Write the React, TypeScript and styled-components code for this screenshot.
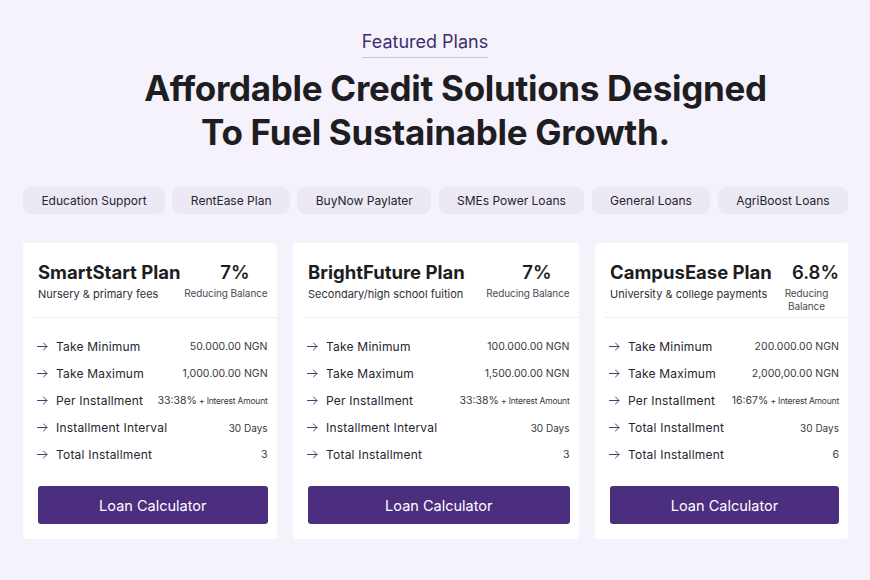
import styled, { createGlobalStyle } from 'styled-components';

interface IRow {
  label: string;
  value: string;
  note?: string;
  small?: boolean;
}

interface IPlan {
  title: string;
  subtitle: string;
  rate: string;
  rows: IRow[];
}

const TABS = ['Education Support', 'RentEase Plan', 'BuyNow Paylater', 'SMEs Power Loans', 'General Loans', 'AgriBoost Loans'];

const PLANS: IPlan[] = [
  {
    title: 'SmartStart Plan',
    subtitle: 'Nursery & primary fees',
    rate: '7%',
    rows: [
      { label: 'Take Minimum', value: '50.000.00 NGN' },
      { label: 'Take Maximum', value: '1,000.00.00 NGN' },
      { label: 'Per Installment', value: '33:38%', note: '+ Interest Amount' },
      { label: 'Installment Interval', value: '30 Days', small: true },
      { label: 'Total Installment', value: '3' },
    ],
  },
  {
    title: 'BrightFuture Plan',
    subtitle: 'Secondary/high school fuition',
    rate: '7%',
    rows: [
      { label: 'Take Minimum', value: '100.000.00 NGN' },
      { label: 'Take Maximum', value: '1,500.00.00 NGN' },
      { label: 'Per Installment', value: '33:38%', note: '+ Interest Amount' },
      { label: 'Installment Interval', value: '30 Days', small: true },
      { label: 'Total Installment', value: '3' },
    ],
  },
  {
    title: 'CampusEase Plan',
    subtitle: 'University & college payments',
    rate: '6.8%',
    rows: [
      { label: 'Take Minimum', value: '200.000.00 NGN' },
      { label: 'Take Maximum', value: '2,000,00.00 NGN' },
      { label: 'Per Installment', value: '16:67%', note: '+ Interest Amount' },
      { label: 'Total Installment', value: '30 Days', small: true },
      { label: 'Total Installment', value: '6' },
    ],
  },
];

const GlobalStyle = createGlobalStyle`
  * { box-sizing: border-box; }
  body {
    margin: 0;
    background: #f6f2fc;
    font-family: Inter, "Noto Sans", sans-serif;
    color: #1f1f24;
  }
`;

const Arrow = () => (
  <svg width="11" height="9" viewBox="0 0 11 9" fill="none" stroke="#4a3d6e" strokeWidth="1" strokeLinecap="round" strokeLinejoin="round">
    <path d="M0.5 4.5 H10" />
    <path d="M6.5 1 L10 4.5 L6.5 8" />
  </svg>
);

const App = () => {
  return (
    <>
      <GlobalStyle />
      <Page>
        <Hero>
          <Eyebrow>Featured Plans</Eyebrow>
          <Heading>
            <span className="first">Affordable Credit Solutions Designed</span>
            <span>To Fuel Sustainable Growth.</span>
          </Heading>
        </Hero>
        <Tabs>
          {TABS.map((tab) => <Tab key={tab}>{tab}</Tab>)}
        </Tabs>
        <Cards>
          {PLANS.map((plan) => (
            <Card key={plan.title}>
              <CardHeader>
                <TitleBlock>
                  <PlanTitle>{plan.title}</PlanTitle>
                  <PlanSub>{plan.subtitle}</PlanSub>
                </TitleBlock>
                <RateBlock>
                  <Rate>{plan.rate}</Rate>
                  <RateLabel>Reducing Balance</RateLabel>
                </RateBlock>
              </CardHeader>
              <Divider />
              <Rows>
                {plan.rows.map((row, index) => (
                  <Row key={index}>
                    <Arrow />
                    <RowLabel>{row.label}</RowLabel>
                    <RowValue $small={row.small}>
                      {row.value}
                      {row.note && <Note> {row.note}</Note>}
                    </RowValue>
                  </Row>
                ))}
              </Rows>
              <CalcButton>Loan Calculator</CalcButton>
            </Card>
          ))}
        </Cards>
      </Page>
    </>
  );
};

export default App;

const Page = styled.div`
  width: 870px;
  height: 580px;
  padding: 32px 22px 0 23px;
`;

const Hero = styled.header`
  display: flex;
  flex-direction: column;
  align-items: center;
`;

const Eyebrow = styled.div`
  margin-right: 21px;
  font-size: 18px;
  line-height: 20px;
  color: #3d2f6b;
  padding-bottom: 5px;
  border-bottom: 1.5px solid #cbc2e0;
`;

const Heading = styled.h1`
  margin: 8px 0 0;
  font-size: 35px;
  line-height: 44px;
  font-weight: 700;
  letter-spacing: -0.3px;
  color: #1e1e22;
  text-align: center;

  span {
    display: block;
  }

  .first {
    padding-left: 40px;
  }
`;

const Tabs = styled.nav`
  margin-top: 33px;
  display: flex;
  gap: 7.5px;
`;

const Tab = styled.div`
  flex: 1 1 auto;
  height: 27px;
  padding: 0 16px;
  display: flex;
  align-items: center;
  justify-content: center;
  border-radius: 8px;
  background: #ece8f4;
  font-size: 12px;
  white-space: nowrap;
  color: #25252e;
`;

const Cards = styled.main`
  margin-top: 29px;
  display: grid;
  grid-template-columns: 254fr 286fr 251fr;
  gap: 16.5px;
`;

const Card = styled.section`
  background: #ffffff;
  border-radius: 4px;
  padding: 0 9px 15px 15px;
  display: flex;
  flex-direction: column;
`;

const CardHeader = styled.div`
  height: 74px;
  padding-top: 17px;
  display: flex;
  align-items: flex-start;
  gap: 2px;
`;

const TitleBlock = styled.div`
  flex: 0 0 auto;
`;

const PlanTitle = styled.div`
  font-size: 18.5px;
  line-height: 24px;
  font-weight: 700;
  white-space: nowrap;
  color: #1d1d21;
`;

const PlanSub = styled.div`
  margin-top: 3px;
  font-size: 11px;
  line-height: 14px;
  color: #2f2f35;
  white-space: nowrap;
`;

const RateBlock = styled.div`
  margin-left: auto;
  flex: 0 1 auto;
  min-width: 0;
  text-align: center;
`;

const Rate = styled.div`
  padding-left: 18px;
  font-size: 18.5px;
  line-height: 24px;
  font-weight: 600;
  color: #1d1d21;
`;

const RateLabel = styled.div`
  margin-top: 3px;
  font-size: 10px;
  line-height: 13px;
  letter-spacing: -0.1px;
  color: #4a4a52;
`;

const Divider = styled.hr`
  margin: 0 -9px 0 -5px;
  border: none;
  border-top: 1px solid #f0eef4;
`;

const Rows = styled.div`
  margin-top: 15px;
  display: flex;
  flex-direction: column;
`;

const Row = styled.div`
  height: 27px;
  display: flex;
  align-items: center;

  svg {
    flex: none;
    margin-left: -1px;
  }
`;

const RowLabel = styled.span`
  margin-left: 8px;
  font-size: 12px;
  letter-spacing: 0.2px;
  color: #26262c;
  white-space: nowrap;
`;

const RowValue = styled.span<{ $small?: boolean }>`
  margin-left: auto;
  font-size: ${(props) => (props.$small ? '10px' : '10.5px')};
  color: #3a3a40;
  white-space: nowrap;
`;

const Note = styled.span`
  font-size: 8.5px;
  letter-spacing: -0.2px;
`;

const CalcButton = styled.button`
  margin-top: 18px;
  height: 38px;
  width: 100%;
  border: none;
  border-radius: 3px;
  background: #4c2e7f;
  color: #ffffff;
  font-family: Inter, "Noto Sans", sans-serif;
  font-size: 14.5px;
  cursor: pointer;
`;
